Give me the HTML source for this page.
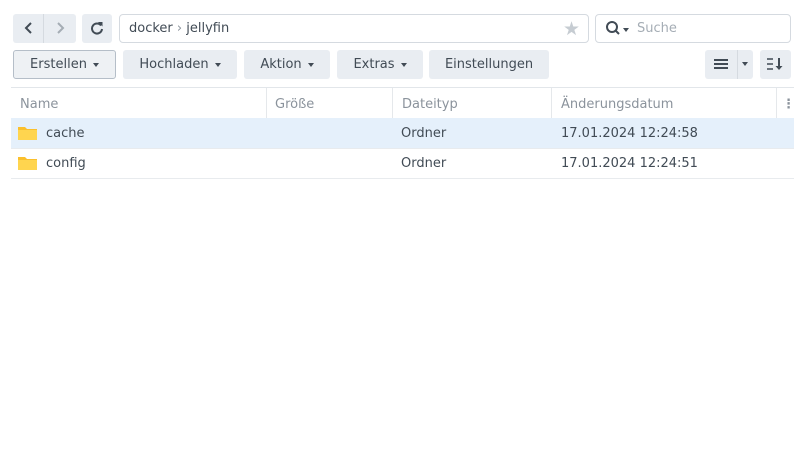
<!DOCTYPE html><html><head><style>
body{margin:0;width:800px;height:476px;background:#fff;font-family:"DejaVu Sans","Liberation Sans",sans-serif;font-size:13px;color:#414b55;position:relative;overflow:hidden}
.a{position:absolute;box-sizing:border-box}
.btn{background:#e9edf2;border-radius:3px;text-align:center;line-height:30px;height:29px;top:50px}
.car{display:inline-block;border-left:3.5px solid transparent;border-right:3.5px solid transparent;border-top:4px solid #414b55;vertical-align:middle;margin-left:6px}
.hd{color:#8b939c;top:97px}
.hdl{position:absolute;top:88px;width:1px;height:30px;background:#e5e8eb}
</style></head><body>
<div class="a" style="left:13px;top:14px;width:63px;height:29px;background:#e9edf2;border-radius:3px"></div>
<div class="a" style="left:43px;top:14px;width:1px;height:29px;background:#d5dae0"></div>
<svg class="a" style="left:22px;top:21px" width="14" height="14"><path d="M9 2L4 7l5 5" stroke="#414b55" stroke-width="2" fill="none"/></svg>
<svg class="a" style="left:53px;top:21px" width="14" height="14"><path d="M5 2l5 5-5 5" stroke="#a5adb5" stroke-width="2" fill="none"/></svg>
<div class="a" style="left:82px;top:14px;width:30px;height:29px;background:#e9edf2;border-radius:3px"></div>
<svg class="a" style="left:90px;top:21px" width="14" height="14"><path d="M11 4.5A5 5 0 1 0 12 8" stroke="#414b55" stroke-width="2" fill="none"/><path d="M8 1h4.5v4.5z" fill="#414b55"/></svg>
<div class="a" style="left:119px;top:14px;width:470px;height:29px;border:1px solid #d5dae0;border-radius:4px"></div>
<div class="a" style="left:129px;top:21px">docker <span style="color:#8b939c">›</span> jellyfin</div>
<div class="a" style="left:563px;top:18px;color:#c6ccd2;font-size:19px">★</div>
<div class="a" style="left:595px;top:14px;width:196px;height:29px;border:1px solid #d5dae0;border-radius:4px"></div>
<svg class="a" style="left:605px;top:20px" width="16" height="16"><circle cx="7" cy="7" r="5" stroke="#414b55" stroke-width="2" fill="none"/><path d="M10.5 10.5L14 14" stroke="#414b55" stroke-width="2"/></svg>
<span class="a car" style="left:617px;top:28px"></span>
<div class="a" style="left:637px;top:21px;color:#a5adb5">Suche</div>
<div class="a btn" style="left:13px;width:103px;border:1px solid #b5bec8;background:#eef1f4;line-height:28px">Erstellen<span class="car"></span></div>
<div class="a btn" style="left:123px;width:114px">Hochladen<span class="car"></span></div>
<div class="a btn" style="left:244px;width:86px">Aktion<span class="car"></span></div>
<div class="a btn" style="left:337px;width:86px">Extras<span class="car"></span></div>
<div class="a btn" style="left:429px;width:120px">Einstellungen</div>
<div class="a btn" style="left:705px;width:48px"></div>
<div class="a" style="left:737px;top:50px;width:1px;height:29px;background:#d5dae0"></div>
<svg class="a" style="left:713px;top:57px" width="16" height="14"><path d="M1 3h14M1 7h14M1 11h14" stroke="#414b55" stroke-width="2"/></svg>
<span class="a car" style="left:742px;top:62px;margin:0"></span>
<div class="a btn" style="left:760px;width:31px"></div>
<svg class="a" style="left:766px;top:56px" width="18" height="16"><path d="M1 3h6M1 8h6M1 13h6" stroke="#414b55" stroke-width="1.6"/><path d="M13 2v10" stroke="#414b55" stroke-width="2"/><path d="M9.5 10l3.5 4 3.5-4z" fill="#414b55"/></svg>
<div class="a" style="left:11px;top:87px;width:783px;height:1px;background:#e2e6ea"></div>
<div class="a hd" style="left:20px">Name</div>
<div class="hdl" style="left:266px"></div><div class="a hd" style="left:275px">Größe</div>
<div class="hdl" style="left:392px"></div><div class="a hd" style="left:402px">Dateityp</div>
<div class="hdl" style="left:551px"></div><div class="a hd" style="left:561px">Änderungsdatum</div>
<div class="hdl" style="left:776px"></div><div class="a hd" style="left:782px;font-weight:bold">⋮</div>
<div class="a" style="left:11px;top:118px;width:783px;height:31px;background:#e5f0fb"></div>
<div class="a" style="left:11px;top:148px;width:783px;height:1px;background:#e8ebee"></div>
<div class="a" style="left:11px;top:178px;width:783px;height:1px;background:#e8ebee"></div>
<svg class="a" style="left:18px;top:125px" width="19" height="16"><path d="M0 2h7l2 2h10v11H0z" fill="#fbc02d"/><path d="M0 5h19v10H0z" fill="#ffd54f"/></svg>
<svg class="a" style="left:18px;top:155px" width="19" height="16"><path d="M0 2h7l2 2h10v11H0z" fill="#fbc02d"/><path d="M0 5h19v10H0z" fill="#ffd54f"/></svg>
<div class="a" style="left:46px;top:126px">cache</div>
<div class="a" style="left:401px;top:126px">Ordner</div>
<div class="a" style="left:561px;top:126px">17.01.2024 12:24:58</div>
<div class="a" style="left:46px;top:156px">config</div>
<div class="a" style="left:401px;top:156px">Ordner</div>
<div class="a" style="left:561px;top:156px">17.01.2024 12:24:51</div>
</body></html>
